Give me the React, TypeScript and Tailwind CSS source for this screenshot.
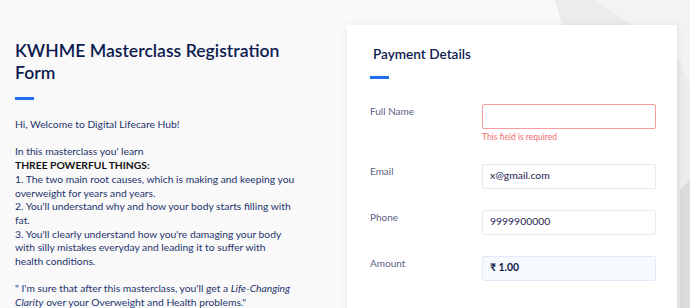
import React from "react"

const font = { fontFamily: "Lato, 'Noto Sans', sans-serif" }

function Backdrop() {
  return (
    <svg className="absolute inset-0 h-full w-full" viewBox="0 0 690 308" preserveAspectRatio="none">
      <rect width="690" height="308" fill="#f9f9fa" />
      <polygon points="555,0 690,0 690,308 640,308" fill="#ececec" />
      <polygon points="595,0 690,0 690,85 680,60" fill="#f3f3f3" />
      <polygon points="680,190 690,180 690,308 680,308" fill="#dcdcdc" />
    </svg>
  )
}

function Field({ label, value, error, tinted }: { label: string; value?: string; error?: boolean; tinted?: boolean }) {
  return (
    <div className="flex">
      <div className="w-[112px] text-[10px] leading-[14px] text-[#5b6282]">{label}</div>
      <div>
        <div
          className={
            "flex h-[25px] w-[174px] items-center rounded-[2px] border px-[7px] text-[10.4px] " +
            (error
              ? "border-[#f79a9a] bg-white"
              : tinted
              ? "border-[#e2eafa] bg-[#f6f9fe] font-bold text-[#0f1a4a]"
              : "border-[#e8eaee] bg-white text-[#1a2350]")
          }
        >
          {value}
        </div>
        {error && <div className="mt-[2px] text-[8.5px] text-[#f36b73]">This field is required</div>}
      </div>
    </div>
  )
}

export default function App() {
  const lines = [
    "1. The two main root causes, which is making and keeping you",
    "overweight for years and years.",
    "2. You'll understand why and how your body starts filling with",
    "fat.",
    "3. You'll clearly understand how you're damaging your body",
    "with silly mistakes everyday and leading it to suffer with",
    "health conditions.",
  ]

  return (
    <div className="relative h-[308px] w-[690px] overflow-hidden" style={font}>
      <Backdrop />
      <div className="relative flex">
        {/* Left: intro text */}
        <div className="w-[347px] pl-[15px] pt-[40px]">
          <h1 className="text-[17.6px] font-semibold leading-[22px] text-[#0d1b50]">
            KWHME Masterclass Registration
            <br />
            Form
          </h1>
          <div className="mt-[13px] h-[3px] w-[19px] bg-[#1f6fee]" />
          <div className="mt-[18px] whitespace-nowrap text-[10.3px] leading-[13.7px] text-[#24336a]">
            <div>Hi, Welcome to Digital Lifecare Hub!</div>
            <div>&nbsp;</div>
            <div>In this masterclass you' learn</div>
            <div className="font-bold text-[#111]">THREE POWERFUL THINGS:</div>
            {lines.map((l) => (
              <div key={l}>{l}</div>
            ))}
            <div>&nbsp;</div>
            <div>
              " I'm sure that after this masterclass, you'll get a <i>Life-Changing</i>
            </div>
            <div>
              <i>Clarity</i> over your Overweight and Health problems."
            </div>
          </div>
        </div>

        {/* Right: payment card */}
        <div className="mt-[25px] h-[300px] w-[330px] rounded-[2px] bg-white pl-[23px] pt-[20px] shadow-[0_1px_8px_rgba(0,0,0,0.08)]">
          <h2 className="pl-[3px] text-[13.6px] font-semibold leading-[18px] text-[#0d1b50]">Payment Details</h2>
          <div className="mt-[13px] h-[3px] w-[19px] bg-[#1f6fee]" />
          <div className="mt-[25px] flex flex-col gap-[21px]">
            <div className="flex flex-col gap-[20px]">
              <Field label="Full Name" error />
              <Field label="Email" value="x@gmail.com" />
            </div>
            <Field label="Phone" value="9999900000" />
            <Field label="Amount" value="₹ 1.00" tinted />
          </div>
        </div>
      </div>
    </div>
  )
}
